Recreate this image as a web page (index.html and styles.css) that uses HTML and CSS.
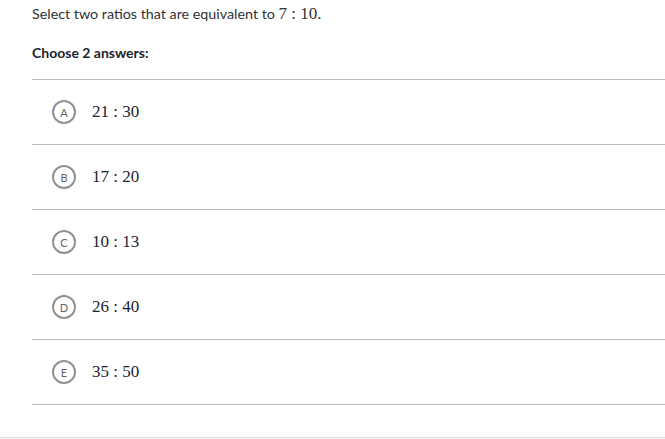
FILE: index.html
```html
<!DOCTYPE html>
<html>
<head>
<meta charset="utf-8">
<link rel="stylesheet" href="styles.css">
</head>
<body>
<div class="page">
  <div class="question">Select two ratios that are equivalent to <span class="math">7 : 10.</span></div>
  <div class="instructions">Choose 2 answers:</div>
  <ul class="choices">
    <li class="choice"><span class="badge">A</span><span class="math">21 : 30</span></li>
    <li class="choice"><span class="badge">B</span><span class="math">17 : 20</span></li>
    <li class="choice"><span class="badge">C</span><span class="math">10 : 13</span></li>
    <li class="choice"><span class="badge">D</span><span class="math">26 : 40</span></li>
    <li class="choice"><span class="badge">E</span><span class="math">35 : 50</span></li>
  </ul>
</div>
<div class="footer"></div>
</body>
</html>
```
FILE: styles.css
```css
html, body {
  margin: 0;
  padding: 0;
  background: #ffffff;
}
body {
  width: 665px;
  height: 439px;
  overflow: hidden;
  font-family: Lato, "Liberation Sans", sans-serif;
  color: #21242c;
  display: flex;
  flex-direction: column;
}
.page {
  padding: 4px 0 0 32px;
  flex: 1;
}
.question {
  font-size: 14.3px;
  line-height: 20px;
  color: #2f3236;
}
.math {
  font-family: "Liberation Serif", "DejaVu Serif", serif;
  font-size: 17px;
}
.instructions {
  margin-top: 19px;
  font-size: 14px;
  line-height: 20px;
  font-weight: bold;
  color: #21242c;
}
.choices {
  list-style: none;
  margin: 16px 0 0 0;
  padding: 0;
  border-top: 1px solid #bababa;
}
.choice {
  height: 64px;
  border-bottom: 1px solid #bababa;
  display: flex;
  align-items: center;
  padding-left: 20px;
  gap: 16px;
}
.badge {
  box-sizing: border-box;
  width: 24px;
  height: 24px;
  border: 2px solid #8f9194;
  border-radius: 50%;
  display: flex;
  align-items: center;
  justify-content: center;
  font-size: 11px;
  color: #626569;
  font-family: Lato, "Liberation Sans", sans-serif;
}
.choice .math {
  color: #21242c;
}
.footer {
  height: 1px;
  border-top: 1px solid #dcdde0;
  background: #f5f6f8;
}
```
